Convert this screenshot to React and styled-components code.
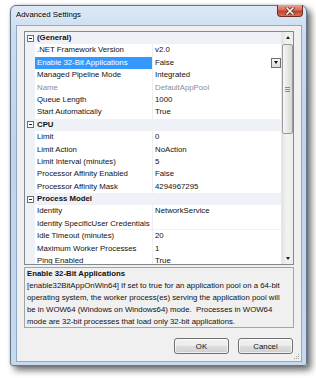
import React from "react";
import styled, { createGlobalStyle } from "styled-components";

const GlobalStyle = createGlobalStyle`
  html, body { margin: 0; padding: 0; background: #ffffff; }
  body { font-family: "Liberation Sans", Arial, sans-serif; font-size: 7.8px; color: #111; }
`;

const Page = styled.div`
  padding: 5px 0 0 10px;
  width: 316px;
  height: 378px;
  box-sizing: border-box;
`;

const Window = styled.div`
  position: relative;
  width: 297px;
  height: 361px;
  box-sizing: border-box;
  display: flex;
  flex-direction: column;
  padding: 0 4px 3px 5px;
  border: 1px solid #62768c;
  border-radius: 6px 6px 3px 3px;
  background: linear-gradient(180deg, #dde9f6 0%, #c9dcf0 8%, #bfd4ea 40%, #c6d9ee 100%);
  box-shadow: 4px 4px 7px rgba(0, 0, 0, 0.6), 0 0 2px rgba(0, 0, 0, 0.25);
`;

const TitleBar = styled.div`
  height: 19px;
  display: flex;
  align-items: flex-start;
  justify-content: space-between;
`;

const Title = styled.span`
  margin-top: 4px;
  font-size: 7.8px;
  color: #000;
  text-shadow: 0 0 4px rgba(255, 255, 255, 0.9);
`;

const CloseButton = styled.div`
  width: 26px;
  height: 12px;
  margin-top: -1px;
  margin-right: -1px;
  box-sizing: border-box;
  border: 1px solid #6f2b24;
  border-top: none;
  border-radius: 0 0 4px 4px;
  background: linear-gradient(180deg, #e8a394 0%, #d7705f 45%, #c2412b 55%, #d6735c 100%);
  display: flex;
  align-items: center;
  justify-content: center;
`;

const Client = styled.div`
  position: relative;
  flex: 1;
  display: flex;
  flex-direction: column;
  padding: 5px 7px 0 7px;
  background: #f0f0f0;
  border: 1px solid #8fa9c6;
`;

const Grid = styled.div`
  height: 234px;
  box-sizing: border-box;
  border: 1px solid #828790;
  background: #fff;
  display: flex;
  overflow: hidden;
`;

const Rows = styled.div`
  flex: 1;
  display: flex;
  flex-direction: column;
  overflow: hidden;
`;

const Row = styled.div`
  flex: 0 0 12.4px;
  height: 12.4px;
  display: grid;
  grid-template-columns: 10px 118px 1fr;
  line-height: 12.4px;
  white-space: nowrap;
  background: ${(p) => (p.$category ? "#eef1f5" : "#fff")};
`;

const Gutter = styled.div`
  background: #eef1f5;
  display: flex;
  align-items: center;
  justify-content: center;
`;

const Expander = styled.span`
  width: 7px;
  height: 7px;
  box-sizing: border-box;
  border: 1px solid #6d6d6d;
  background: #fff;
  display: flex;
  align-items: center;
  justify-content: center;
  &::after {
    content: "";
    width: 3px;
    height: 1px;
    background: #222;
  }
`;

const CategoryLabel = styled.div`
  grid-column: 2 / 4;
  padding-left: 2px;
  font-weight: bold;
  color: #111;
`;

const NameCell = styled.div`
  padding-left: 2px;
  box-sizing: border-box;
  border-right: 1px solid #eceef2;
  border-bottom: 1px solid #f2f3f5;
  overflow: hidden;
  background: ${(p) => (p.$selected ? "#3399ff" : "transparent")};
  color: ${(p) => (p.$selected ? "#fff" : p.$disabled ? "#8d8d8d" : "#111")};
`;

const ValueCell = styled.div`
  padding-left: 2px;
  box-sizing: border-box;
  border-bottom: 1px solid #f2f3f5;
  display: flex;
  align-items: center;
  justify-content: space-between;
  color: ${(p) => (p.$disabled ? "#8d8d8d" : "#111")};
`;

const DropButton = styled.span`
  width: 10px;
  height: 10px;
  box-sizing: border-box;
  border: 1px solid #707070;
  background: linear-gradient(180deg, #f6f6f6, #dcdcdc);
  display: flex;
  align-items: center;
  justify-content: center;
  &::after {
    content: "";
    border-left: 2.5px solid transparent;
    border-right: 2.5px solid transparent;
    border-top: 3px solid #111;
  }
`;

const ScrollBar = styled.div`
  width: 11px;
  display: flex;
  flex-direction: column;
  background: linear-gradient(90deg, #e3e3e3, #f2f2f2 40%, #ededed);
  border-left: 1px solid #e8e8e8;
`;

const ArrowButton = styled.div`
  height: 11px;
  display: flex;
  align-items: center;
  justify-content: center;
  &::after {
    content: "";
    border-left: 2.5px solid transparent;
    border-right: 2.5px solid transparent;
    ${(p) => (p.$down ? "border-top: 3px solid #222;" : "border-bottom: 3px solid #222;")}
  }
`;

const Track = styled.div`
  flex: 1;
  display: flex;
  flex-direction: column;
  padding-top: 1px;
`;

const Thumb = styled.div`
  height: 90px;
  box-sizing: border-box;
  border: 1px solid #9a9a9a;
  border-radius: 2px;
  background: linear-gradient(90deg, #f7f7f7, #e8e8e8 50%, #d6d6d6);
  display: flex;
  flex-direction: column;
  align-items: center;
  justify-content: center;
  gap: 1px;
`;

const GripLine = styled.span`
  width: 5px;
  height: 1px;
  background: #8a8a8a;
`;

const Description = styled.div`
  margin-top: 2px;
  height: 61px;
  box-sizing: border-box;
  border: 1px solid #a3a3a3;
  padding: 0 2px;
  line-height: 12px;
  color: #111;
  white-space: nowrap;
  overflow: hidden;
`;

const DescTitle = styled.div`
  font-weight: bold;
`;

const ButtonRow = styled.div`
  margin-top: 10px;
  display: flex;
  justify-content: flex-end;
  gap: 9px;
  padding-right: 1px;
`;

const Button = styled.div`
  width: 55px;
  height: 16px;
  box-sizing: border-box;
  border: 1px solid #707070;
  border-radius: 3px;
  background: linear-gradient(180deg, #f2f2f2 0%, #ebebeb 48%, #dddddd 52%, #cfcfcf 100%);
  box-shadow: inset 0 0 0 1px rgba(255, 255, 255, 0.7);
  display: flex;
  align-items: center;
  justify-content: center;
  color: #111;
`;

const Grip = styled.svg`
  position: absolute;
  right: 1px;
  bottom: 1px;
`;

const rows = [
  { cat: "(General)" },
  { name: ".NET Framework Version", value: "v2.0" },
  { name: "Enable 32-Bit Applications", value: "False", selected: true },
  { name: "Managed Pipeline Mode", value: "Integrated" },
  { name: "Name", value: "DefaultAppPool", disabled: true },
  { name: "Queue Length", value: "1000" },
  { name: "Start Automatically", value: "True" },
  { cat: "CPU" },
  { name: "Limit", value: "0" },
  { name: "Limit Action", value: "NoAction" },
  { name: "Limit Interval (minutes)", value: "5" },
  { name: "Processor Affinity Enabled", value: "False" },
  { name: "Processor Affinity Mask", value: "4294967295" },
  { cat: "Process Model" },
  { name: "Identity", value: "NetworkService" },
  { name: "Identity SpecificUser Credentials", value: "" },
  { name: "Idle Timeout (minutes)", value: "20" },
  { name: "Maximum Worker Processes", value: "1" },
  { name: "Ping Enabled", value: "True" },
];

export default function App() {
  return (
    <>
      <GlobalStyle />
      <Page>
        <Window>
          <TitleBar>
            <Title>Advanced Settings</Title>
            <CloseButton>
              <svg width="10" height="8" viewBox="0 0 10 8">
                <path d="M2 1 L8 7 M8 1 L2 7" stroke="#5a1d16" strokeWidth="3" strokeLinecap="square" />
                <path d="M2 1 L8 7 M8 1 L2 7" stroke="#ffffff" strokeWidth="1.6" strokeLinecap="square" />
              </svg>
            </CloseButton>
          </TitleBar>
          <Client>
            <Grid>
              <Rows>
                {rows.map((r, i) =>
                  r.cat ? (
                    <Row key={i} $category>
                      <Gutter>
                        <Expander />
                      </Gutter>
                      <CategoryLabel>{r.cat}</CategoryLabel>
                    </Row>
                  ) : (
                    <Row key={i}>
                      <Gutter />
                      <NameCell $selected={r.selected} $disabled={r.disabled}>
                        {r.name}
                      </NameCell>
                      <ValueCell $disabled={r.disabled}>
                        <span>{r.value}</span>
                        {r.selected && <DropButton />}
                      </ValueCell>
                    </Row>
                  )
                )}
              </Rows>
              <ScrollBar>
                <ArrowButton />
                <Track>
                  <Thumb>
                    <GripLine />
                    <GripLine />
                    <GripLine />
                  </Thumb>
                </Track>
                <ArrowButton $down />
              </ScrollBar>
            </Grid>
            <Description>
              <DescTitle>Enable 32-Bit Applications</DescTitle>
              <div>[enable32BitAppOnWin64] If set to true for an application pool on a 64-bit</div>
              <div>operating system, the worker process(es) serving the application pool will</div>
              <div>be in WOW64 (Windows on Windows64) mode.&nbsp; Processes in WOW64</div>
              <div>mode are 32-bit processes that load only 32-bit applications.</div>
            </Description>
            <ButtonRow>
              <Button>OK</Button>
              <Button>Cancel</Button>
            </ButtonRow>
            <Grip width="8" height="8" viewBox="0 0 8 8">
              <rect x="6" y="2" width="1" height="1" fill="#a0a0a0" />
              <rect x="4" y="4" width="1" height="1" fill="#a0a0a0" />
              <rect x="6" y="4" width="1" height="1" fill="#a0a0a0" />
              <rect x="2" y="6" width="1" height="1" fill="#a0a0a0" />
              <rect x="4" y="6" width="1" height="1" fill="#a0a0a0" />
              <rect x="6" y="6" width="1" height="1" fill="#a0a0a0" />
            </Grip>
          </Client>
        </Window>
      </Page>
    </>
  );
}
